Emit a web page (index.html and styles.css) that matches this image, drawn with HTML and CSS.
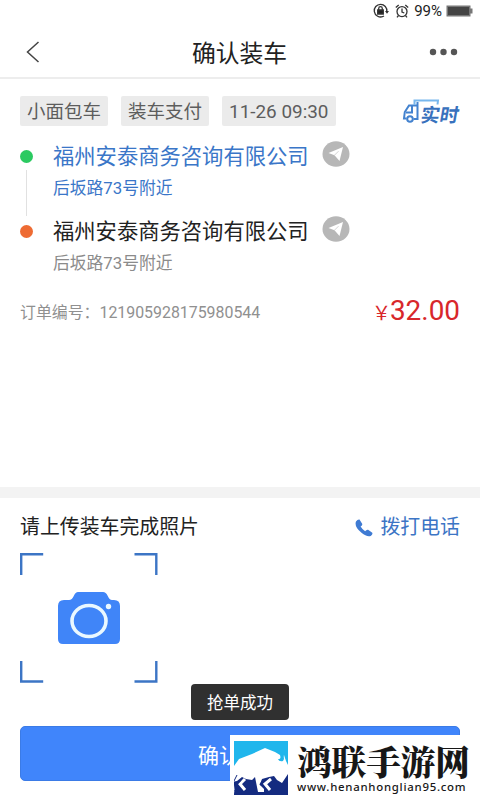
FILE: index.html
```html
<!DOCTYPE html>
<html lang="zh-CN">
<head>
<meta charset="utf-8">
<title>确认装车</title>
<link rel="stylesheet" href="styles.css">
</head>
<body>
<div class="screen">
  <div class="status">
    <svg width="16" height="16" viewBox="0 0 16 16" fill="none" stroke="#333" stroke-width="1.3"><path d="M9.5 13.6A6.3 6.3 0 1 1 13.8 8.5M4.6 13.2A6.3 6.3 0 0 0 11 13"/><path d="M12 8h4l-2 2.7z" fill="#333" stroke="none"/><path d="M4.7 7h5.6v4H4.7z" fill="#222"/><path d="M5.7 7V5.5a1.8 1.8 0 0 1 3.6 0V7"/></svg>
    <svg class="alarm" width="14" height="14" viewBox="0 0 14 14" fill="none" stroke="#333" stroke-width="1.3"><circle cx="7" cy="7.6" r="5"/><path d="M.8 3.5 3.7 1M13.2 3.5 10.3 1M7 4.5V8l2.3 1M3.5 11.5 2 13.3M10.5 11.5 12 13.3"/></svg>
    <span>99%</span>
    <svg class="battery" width="27" height="12" viewBox="0 0 27 12"><path d="M.5.5h24v3h2v5h-2v3H.5z" fill="#777"/><path d="M2 2h21v8H2z" fill="#444"/></svg>
  </div>
  <header class="bar">
    <svg class="back" width="14" height="22" viewBox="0 0 14 22" fill="none" stroke="#444" stroke-width="1.5"><path d="M12.5 1 1.5 11l11 10"/></svg>
    <h1>确认装车</h1>
    <svg class="more" width="30" height="8" viewBox="0 0 30 8" fill="#555"><circle cx="4" cy="4" r="3.2"/><circle cx="14.5" cy="4" r="3.2"/><circle cx="25" cy="4" r="3.2"/></svg>
  </header>
  <section class="order">
    <div class="tags">
      <span class="tag">小面包车</span><span class="tag">装车支付</span><span class="tag time">11-26 09:30</span>
      <div class="live">
        <svg width="38" height="28" viewBox="0 0 38 28" fill="none" stroke="#4382cf" stroke-width="2"><path d="M15.500 5v17h-4M4.500 21.500H2l.8-6.500L7 8.500h7.500"/><path d="M4 15.500h6V9" stroke-width="2"/><path d="M12.500 8V3.500H36l-.5 4" stroke="#78b7ed"/><circle cx="8" cy="22" r="2.800" fill="#fff"/></svg>
        <b>实时</b>
      </div>
    </div>
    <div class="route">
      <div class="stop">
        <i class="dot"></i>
        <div><p class="name">福州安泰商务咨询有限公司</p><p class="addr">后坂路73号附近</p></div>
        <svg class="nav" width="28" height="26" viewBox="0 0 28 26"><ellipse cx="14" cy="13" rx="13.500" ry="12.700" fill="#b7b7b7"/><path d="M21 6 6.500 12l6 2.200L17.500 20z" fill="#fff"/><path d="m12.500 14.200 4-4" stroke="#c8c8c8" stroke-width=".8"/></svg>
      </div>
      <i class="line"></i>
      <div class="stop end">
        <i class="dot"></i>
        <div><p class="name">福州安泰商务咨询有限公司</p><p class="addr">后坂路73号附近</p></div>
        <svg class="nav" width="28" height="26" viewBox="0 0 28 26"><ellipse cx="14" cy="13" rx="13.500" ry="12.700" fill="#b7b7b7"/><path d="M21 6 6.500 12l6 2.200L17.500 20z" fill="#fff"/><path d="m12.500 14.200 4-4" stroke="#c8c8c8" stroke-width=".8"/></svg>
      </div>
    </div>
    <div class="summary">
      <span>订单编号：121905928175980544</span>
      <span class="price"><small>￥</small>32.00</span>
    </div>
  </section>
  <section class="upload">
    <div class="upload-head">
      <span>请上传装车完成照片</span>
      <span class="call"><svg width="18" height="18" viewBox="0 0 18 18" fill="#3f7bd3"><path d="M1 2.500Q2.500.3 4.500.6L7.300 5Q7.500 6.500 5.600 7.600q1.500 2.700 4.500 4.600 1.400-1.900 3-1.500l4.200 3q.7 1.900-1.600 3.300-4 1.200-9.200-3.200Q-1 7.500 1 2.500z"/></svg>拨打电话</span>
    </div>
    <svg class="photo" width="138" height="130" viewBox="0 0 138 130">
      <path d="M1.200 22V1.200h22M114.500 1.200h21.800V22M1.200 108v20.500h22M114.500 128.500h21.800V108" fill="none" stroke="#3c75c5" stroke-width="2.400"/>
      <path d="M44 47h5q3 0 5-4.500Q55.500 39 58 39h25q3 0 4.500 3.500Q89.500 47 92 47h2q6 0 6 6v33q0 5-5 5H43q-5 0-5-5V53q0-6 6-6z" fill="#4085f8"/>
      <ellipse cx="69" cy="68" rx="17" ry="15.500" fill="none" stroke="#eaf8ff" stroke-width="3.600"/><circle cx="88.500" cy="53.500" r="2.700" fill="#eaf8ff"/>
    </svg>
  </section>
  <button class="confirm">确认装车</button>
  <div class="toast">抢单成功</div>
  <div class="brand">
    <svg width="54" height="54" viewBox="0 0 54 54"><path d="M0 0h54v54H0z" fill="#20b6ec"/><path d="M0 30h54v24H0z" fill="#142b80"/><path d="M0 25 5 18 18 13 31 7l10 4 5 3 2 5 2-5 2 6 2 4v9l-6 9-5-3-3-4-5 1-7 2-2 6 4 4v3h-6l-2-10-1-5-3 3-6-1-4-2-5 4-5 1-1 5 4 4v3H1l-1-9z" fill="#fff"/><path d="M46 11q6 4 3 9-4 1-5-2 4 1 2-7z" fill="#20b6ec"/><path d="m0 40 3-6" stroke="#142b80"/><path d="m11 38-5 5 5 6M37 38l-6 5 5 6" fill="none" stroke="#fff" stroke-width="3"/><path d="m7 39-4 4M29 39l-3 5" stroke="#142b80" stroke-width="1.500"/></svg>
    <div class="brand-text"><strong>鸿联手游网</strong><span>www.henanhonglian95.com</span></div>
  </div>
</div>
</body>
</html>
```
FILE: styles.css
```css
* { box-sizing: border-box; }
body, h1, p { margin: 0; }
body { background: #fff; font-family: Roboto, "Noto Sans CJK SC", sans-serif; color: #222; }
.screen { position: relative; width: 480px; height: 800px; overflow: hidden; display: flex; flex-direction: column; }
svg { display: block; flex: none; }
.status { height: 24px; flex: none; display: flex; align-items: center; justify-content: flex-end; padding: 0 7px 2px 0; font-size: 15px; line-height: 20px; }
.status .alarm { margin: 0 5px 0 6px; }
.status .battery { margin-left: 4px; }
.bar { height: 55px; flex: none; display: flex; align-items: center; justify-content: space-between; padding: 2px 21px 0 26px; border-bottom: 2px solid #ededed; }
.bar h1 { font-size: 23.8px; line-height: 32px; font-weight: 400; margin-left: 10px; padding-top: 4px; }
.order { height: 408px; flex: none; padding: 17px 20px 0; }
.tags { display: flex; height: 30px; gap: 13px; }
.tag { padding: 1px 7px 0; height: 30px; line-height: 30px; font-size: 18.5px; background: #ebebeb; color: #5d5d5d; border-radius: 2px; white-space: nowrap; }
.time { width: 114px; font-size: 18.9px; }
.live { margin-left: auto; display: flex; width: 58px; height: 30px; align-items: center; color: #3871bd; }
.live b { font-size: 19px; line-height: 19px; height: 19px; margin: 9px 0 0 -19px; transform: skewX(-10deg); white-space: nowrap; }
.route { padding-top: 14px; }
.stop { display: flex; align-items: flex-start; height: 58px; color: #3a76c8; }
.dot { width: 13px; height: 13px; border-radius: 50%; background: #2bca61; margin: 10px 20px 0 0; }
.name { font-size: 21.3px; line-height: 32px; padding-top: 1px; white-space: nowrap; }
.addr { font-size: 16.8px; line-height: 24px; margin-top: 3px; }
.nav { margin: 1px 0 0 13px; }
.line { display: block; width: 1px; height: 46px; background: #e1e1e1; margin: -28px 0 -1px 6px; }
.end { color: #222; }
.end .dot { background: #ee6b33; }
.end .addr { color: #8b8b8b; }
.summary { display: flex; justify-content: space-between; align-items: center; margin-top: 20px; height: 36px; color: #909090; font-size: 15.9px; }
.price { color: #d8272b; font-size: 27.9px; line-height: 36px; padding-top: 2px; }
.price small { font-size: 19px; margin-right: -1px; }
.upload { flex: none; height: 239px; border-top: 11px solid #f3f3f3; padding: 15px 20px 0; }
.upload-head { display: flex; justify-content: space-between; height: 30px; font-size: 19.9px; line-height: 30px; }
.call { display: flex; align-items: center; gap: 7px; color: #3c75c5; }
.photo { margin-top: 10px; }
.confirm { flex: none; height: 55px; margin: 0 20px; border: 1px solid #3b7be6; border-radius: 5px; background: #4085fb; color: #fff; font: 21px Roboto, "Noto Sans CJK SC", sans-serif; }
.toast { position: absolute; left: 191px; top: 684px; width: 98px; height: 36px; padding-top: 2px; border-radius: 4px; background: #303030; color: #fff; font-size: 16.5px; line-height: 36px; text-align: center; }
.brand { position: absolute; right: 0; bottom: 0; width: 250px; height: 65px; background: #fff; display: flex; gap: 9px; padding: 6px 0 0 4px; }
.brand-text { display: flex; flex-direction: column; color: #171717; }
.brand-text strong { font: 900 34.6px/38px "Noto Serif CJK SC", "Noto Sans CJK SC", serif; white-space: nowrap; }
.brand-text span { font: 500 11.4px/16px "Noto Sans", sans-serif; letter-spacing: .74px; }
```
